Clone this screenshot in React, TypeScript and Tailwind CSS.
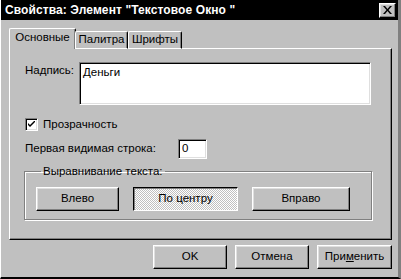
import React from 'react';

const raised =
  'border border-t-white border-l-white border-r-black border-b-black shadow-[inset_-1px_-1px_0_#808080,inset_1px_1px_0_#dfdfdf]';
const sunken =
  'border border-t-[#808080] border-l-[#808080] border-r-white border-b-white shadow-[inset_1px_1px_0_#000,inset_-1px_-1px_0_#dfdfdf]';

const Button: React.FC<{ w: string; children: React.ReactNode; pressed?: boolean }> = ({ w, children, pressed }) => (
  <div
    className={`${w} h-[24px] flex items-center justify-center ${
      pressed
        ? 'border border-t-black border-l-black border-r-white border-b-white shadow-[inset_1px_1px_0_#808080] bg-[repeating-conic-gradient(#ffffff_0_25%,#c0c0c0_0_50%)] bg-[length:2px_2px]'
        : `${raised} bg-[#c0c0c0]`
    }`}
  >
    {children}
  </div>
);

export default function App() {
  return (
    <div className="w-[401px] h-[279px] bg-[#c0c0c0] text-black text-[11.5px] leading-none font-['Liberation_Sans',Arial,sans-serif] overflow-hidden border-l border-l-white border-r-[3px] border-r-[#808080] border-b-2 border-b-black flex flex-col">
      {/* Title bar */}
      <div className="h-[20px] bg-black flex items-center justify-between pl-[4px] pr-[2px]">
        <span className="text-white font-bold text-[12px] tracking-[0.1px]">Свойства: Элемент "Текстовое Окно "</span>
        <div className={`w-[17px] h-[15px] ${raised} bg-[#c0c0c0] flex items-center justify-center`}>
          <svg width="9" height="8" viewBox="0 0 9 8">
            <path d="M0 0h2l2.5 3 2.5-3h2l-3.5 4 3.5 4h-2l-2.5-3-2.5 3h-2l3.5-4z" fill="#000" />
          </svg>
        </div>
      </div>

      <div className="flex-1 flex flex-col pl-[8px] pr-[5px] pt-[8px]">
        {/* Tabs */}
        <div className="flex items-end h-[21px] relative z-10 -mb-[1px]">
          <div className="h-[21px] w-[67px] -mr-[1px] border-t border-l border-t-white border-l-white border-r border-r-black shadow-[inset_-1px_0_0_#808080] rounded-t-[2px] bg-[#c0c0c0] flex items-center justify-center pb-[2px]">
            Основные
          </div>
          <div className="h-[18px] w-[53px] border-t border-l border-t-white border-l-white border-r border-r-black shadow-[inset_-1px_0_0_#808080] border-b border-b-white rounded-t-[2px] flex items-center justify-center">
            Палитра
          </div>
          <div className="h-[18px] w-[54px] border-t border-l border-t-white border-l-white border-r border-r-black shadow-[inset_-1px_0_0_#808080] border-b border-b-white rounded-t-[2px] flex items-center justify-center">
            Шрифты
          </div>
        </div>

        {/* Panel */}
        <div className="h-[192px] w-[383px] border border-t-white border-l-white border-r-black border-b-black shadow-[inset_-1px_-1px_0_#808080] pl-[15px] pt-[13px] flex flex-col">
          <div className="flex">
            <div className="w-[54px] pt-[3px]">Надпись:</div>
            <div className={`w-[292px] h-[43px] bg-white ${sunken} pl-[3px] pt-[4px]`}>Деньги</div>
          </div>

          <div className="flex items-center mt-[13px] h-[13px]">
            <div className={`w-[13px] h-[13px] bg-white ${sunken} flex items-center justify-center`}>
              <svg width="7" height="7" viewBox="0 0 7 7">
                <path d="M0 2l2 2 5-5v2l-5 5-2-2z" fill="#000" />
              </svg>
            </div>
            <span className="ml-[5px]">Прозрачность</span>
          </div>

          <div className="flex items-center mt-[8px]">
            <div className="w-[153px]">Первая видимая строка:</div>
            <div className={`w-[29px] h-[20px] bg-white ${sunken} pl-[3px] flex items-center`}>0</div>
          </div>

          <fieldset className="mt-[7px] w-[348px] h-[54px] -ml-[1px] border border-[#808080] shadow-[1px_1px_0_#fff,inset_1px_1px_0_#fff] px-[11px]">
            <legend className="ml-[5px] px-[2px]">Выравнивание текста:</legend>
            <div className="flex items-center gap-[14px] mt-[9px]">
              <Button w="w-[83px]">Влево</Button>
              <Button w="w-[105px]" pressed>
                По центру
              </Button>
              <Button w="w-[98px]">Вправо</Button>
            </div>
          </fieldset>
        </div>

        {/* Bottom buttons */}
        <div className="flex justify-end gap-[8px] mt-[5px] pr-[1px]">
          <Button w="w-[74px]">OK</Button>
          <Button w="w-[74px]">Отмена</Button>
          <Button w="w-[75px]">
            <span>
              При<span className="underline">м</span>енить
            </span>
          </Button>
        </div>
      </div>
    </div>
  );
}
